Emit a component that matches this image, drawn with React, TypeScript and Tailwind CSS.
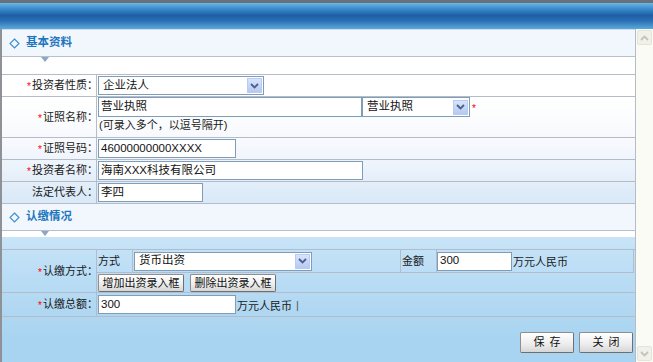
import React from "react";

const font = "font-['Liberation_Sans','Noto_Sans_CJK_SC',sans-serif]";

function Star() {
  return <span className="text-[#ff0000] text-[10px] mr-[1px] relative top-[1px]">*</span>;
}

function Label({ req, children }: { req?: boolean; children: React.ReactNode }) {
  return (
    <div className="w-[95px] shrink-0 border-r border-[#b3bcc8] flex items-center justify-end pr-0 text-[11px] text-[#1a1a1a] whitespace-nowrap">
      {req && <Star />}
      {children}
      <span className="-mr-[2px]">：</span>
    </div>
  );
}

function TextBox({ w, value }: { w: string; value: string }) {
  return (
    <div className={`${w} h-[19px] border border-[#7f9db9] bg-white pl-[2px] flex items-center text-[11.5px] text-[#111] leading-none shrink-0`}>
      {value}
    </div>
  );
}

function Chevron({ up, color }: { up?: boolean; color: string }) {
  return (
    <svg width="9" height="6" viewBox="0 0 9 6">
      <path d={up ? "M1 5 L4.5 1.5 L8 5" : "M1 1 L4.5 4.5 L8 1"} fill="none" stroke={color} strokeWidth="1.8" />
    </svg>
  );
}

function Select({ w, h = "h-[19px]", value }: { w: string; h?: string; value: string }) {
  return (
    <div className={`${w} ${h} border border-[#7f9db9] bg-white flex items-center justify-between shrink-0`}>
      <span className="pl-[4px] text-[11.5px] text-[#111] leading-none">{value}</span>
      <span className="w-[15px] h-[15px] mr-[1px] bg-[linear-gradient(180deg,#d8e4fc,#b5c9f4)] border border-[#b8cbf2] flex items-center justify-center">
        <Chevron color="#4d6185" />
      </span>
    </div>
  );
}

function Diamond() {
  return (
    <svg width="11" height="11" viewBox="0 0 11 11" className="shrink-0">
      <path d="M5.5 1 L10 5.5 L5.5 10 L1 5.5 Z" fill="none" stroke="#3a8fd0" strokeWidth="1.1" />
    </svg>
  );
}

function Section({ title, first }: { title: string; first?: boolean }) {
  return (
    <div
      className={`flex items-center pl-[7px] gap-[6px] bg-[#f2f6fd] border-b border-[#b7c1ce] ${
        first ? "h-[28px] border-t border-t-[#d3dbe6]" : "h-[27px]"
      }`}
    >
      <Diamond />
      <span className="text-[11.5px] font-bold text-[#1d77be]">{title}</span>
    </div>
  );
}

function Spacer({ h }: { h: string }) {
  return (
    <div className={`${h} border-b border-[#b3bcc8]`}>
      <div className="h-[6px] bg-white pl-[39px]">
        <div className="w-0 h-0 border-x-[4px] border-x-transparent border-t-[5px] border-t-[#8da7c1]" />
      </div>
    </div>
  );
}

function Btn({ children, w, h }: { children: React.ReactNode; w: string; h: string }) {
  return (
    <div
      className={`${w} ${h} border border-[#8f8f8f] border-r-[#6f6f6f] border-b-[#6f6f6f] rounded-[2px] bg-[linear-gradient(180deg,#ffffff,#ececec_60%,#d6d6d6)] flex items-center justify-center text-[11px] text-[#111] leading-none`}
    >
      {children}
    </div>
  );
}

export default function App() {
  return (
    <div className={`w-[653px] h-[362px] overflow-hidden flex flex-col ${font}`}>
      {/* top window bar */}
      <div className="h-[3px] bg-[#68717a]" />
      <div className="h-[26px] bg-[linear-gradient(180deg,#69b8e5_0%,#3b8cce_22%,#1f5da4_48%,#2a6fb3_68%,#5aa9dc_100%)]" />

      <div className="flex flex-1">
        <div className="w-[2px] bg-[#8e9296]" />

        {/* content */}
        <div className="w-[634px] border-r border-[#b4bcc6] flex flex-col bg-[linear-gradient(180deg,#ffffff_70px,#f5f8fd_119px,#eaf2fb_141px,#deebf8_163px,#c6e3f7_213px,#bcdef6_241px,#b2d8f2_276px,#a8d4f1_311px)]">
          <Section title="基本资料" first />
          <Spacer h="h-[18px]" />

          <div className="flex h-[22px] border-b border-[#b3bcc8]">
            <Label req>投资者性质</Label>
            <div className="pl-[1px] pt-[1px]">
              <Select w="w-[166px]" value="企业法人" />
            </div>
          </div>

          <div className="flex h-[41px] border-b border-[#b3bcc8]">
            <Label req>证照名称</Label>
            <div className="pl-[1px] flex flex-col">
              <div className="flex items-center">
                <TextBox w="w-[264px] h-[20px]" value="营业执照" />
                <Select w="w-[108px]" h="h-[20px]" value="营业执照" />
                <span className="text-[#ff0000] text-[10px] ml-[2px] mt-[3px]">*</span>
              </div>
              <div className="text-[11px] text-[#1a1a1a] mt-[3px] pl-[1px] leading-none">(可录入多个，以逗号隔开)</div>
            </div>
          </div>

          <div className="flex h-[22px] border-b border-[#b3bcc8]">
            <Label req>证照号码</Label>
            <div className="pl-[1px] pt-[1px]">
              <TextBox w="w-[138px]" value="46000000000XXXX" />
            </div>
          </div>

          <div className="flex h-[22px] border-b border-[#b3bcc8]">
            <Label req>投资者名称</Label>
            <div className="pl-[1px] pt-[1px]">
              <TextBox w="w-[265px]" value="海南XXX科技有限公司" />
            </div>
          </div>

          <div className="flex h-[22px] border-b border-[#b3bcc8]">
            <Label>法定代表人</Label>
            <div className="pl-[1px] pt-[1px]">
              <TextBox w="w-[105px]" value="李四" />
            </div>
          </div>

          <Section title="认缴情况" />
          <Spacer h="h-[19px]" />

          <div className="flex h-[43px] border-b border-[#b3bcc8]">
            <Label req>认缴方式</Label>
            <div className="flex-1 flex flex-col">
              <div className="flex h-[23px] border-b border-r border-[#b3bcc8] mr-[1px]">
                <div className="w-[36px] border-r border-[#b3bcc8] flex items-center pl-[1px] text-[11px] text-[#1a1a1a]">方式</div>
                <div className="w-[268px] border-r border-[#b3bcc8] pl-[1px] flex items-center">
                  <Select w="w-[178px]" value="货币出资" />
                </div>
                <div className="w-[36px] border-r border-[#b3bcc8] flex items-center pl-[1px] text-[11px] text-[#1a1a1a]">金额</div>
                <div className="flex items-center">
                  <TextBox w="w-[75px]" value="300" />
                  <span className="text-[11px] text-[#1a1a1a] ml-[1px] mt-[3px]">万元人民币</span>
                </div>
              </div>
              <div className="flex items-center gap-[6px] pl-[1px] pt-[1px]">
                <Btn w="w-[86px]" h="h-[18px]">增加出资录入框</Btn>
                <Btn w="w-[86px]" h="h-[18px]">删除出资录入框</Btn>
              </div>
            </div>
          </div>

          <div className="flex h-[24px] border-b border-[#b3bcc8]">
            <Label req>认缴总额</Label>
            <div className="pl-[1px] flex items-center">
              <TextBox w="w-[138px]" value="300" />
              <span className="text-[11px] text-[#1a1a1a] ml-[1px] mt-[4px]">万元人民币</span>
              <span className="text-[11px] text-[#555] ml-[4px] mt-[2px]">|</span>
            </div>
          </div>

          <div className="flex justify-end gap-[5px] pr-[2px] mt-[15px]">
            <Btn w="w-[54px]" h="h-[21px]"><span className="tracking-[5px] pl-[5px]">保存</span></Btn>
            <Btn w="w-[54px]" h="h-[21px]"><span className="tracking-[5px] pl-[5px]">关闭</span></Btn>
          </div>
        </div>

        {/* scrollbar */}
        <div className="flex-1 bg-[#fbfbf6] flex flex-col justify-between items-center py-[1px]">
          <div className="w-[15px] h-[15px] bg-[#f1f1ea] border border-[#e4e4dc] rounded-[2px] flex items-center justify-center">
            <Chevron up color="#c4c4bc" />
          </div>
          <div className="w-[15px] h-[15px] bg-[#f1f1ea] border border-[#e4e4dc] rounded-[2px] flex items-center justify-center">
            <Chevron color="#c4c4bc" />
          </div>
        </div>
      </div>
    </div>
  );
}
